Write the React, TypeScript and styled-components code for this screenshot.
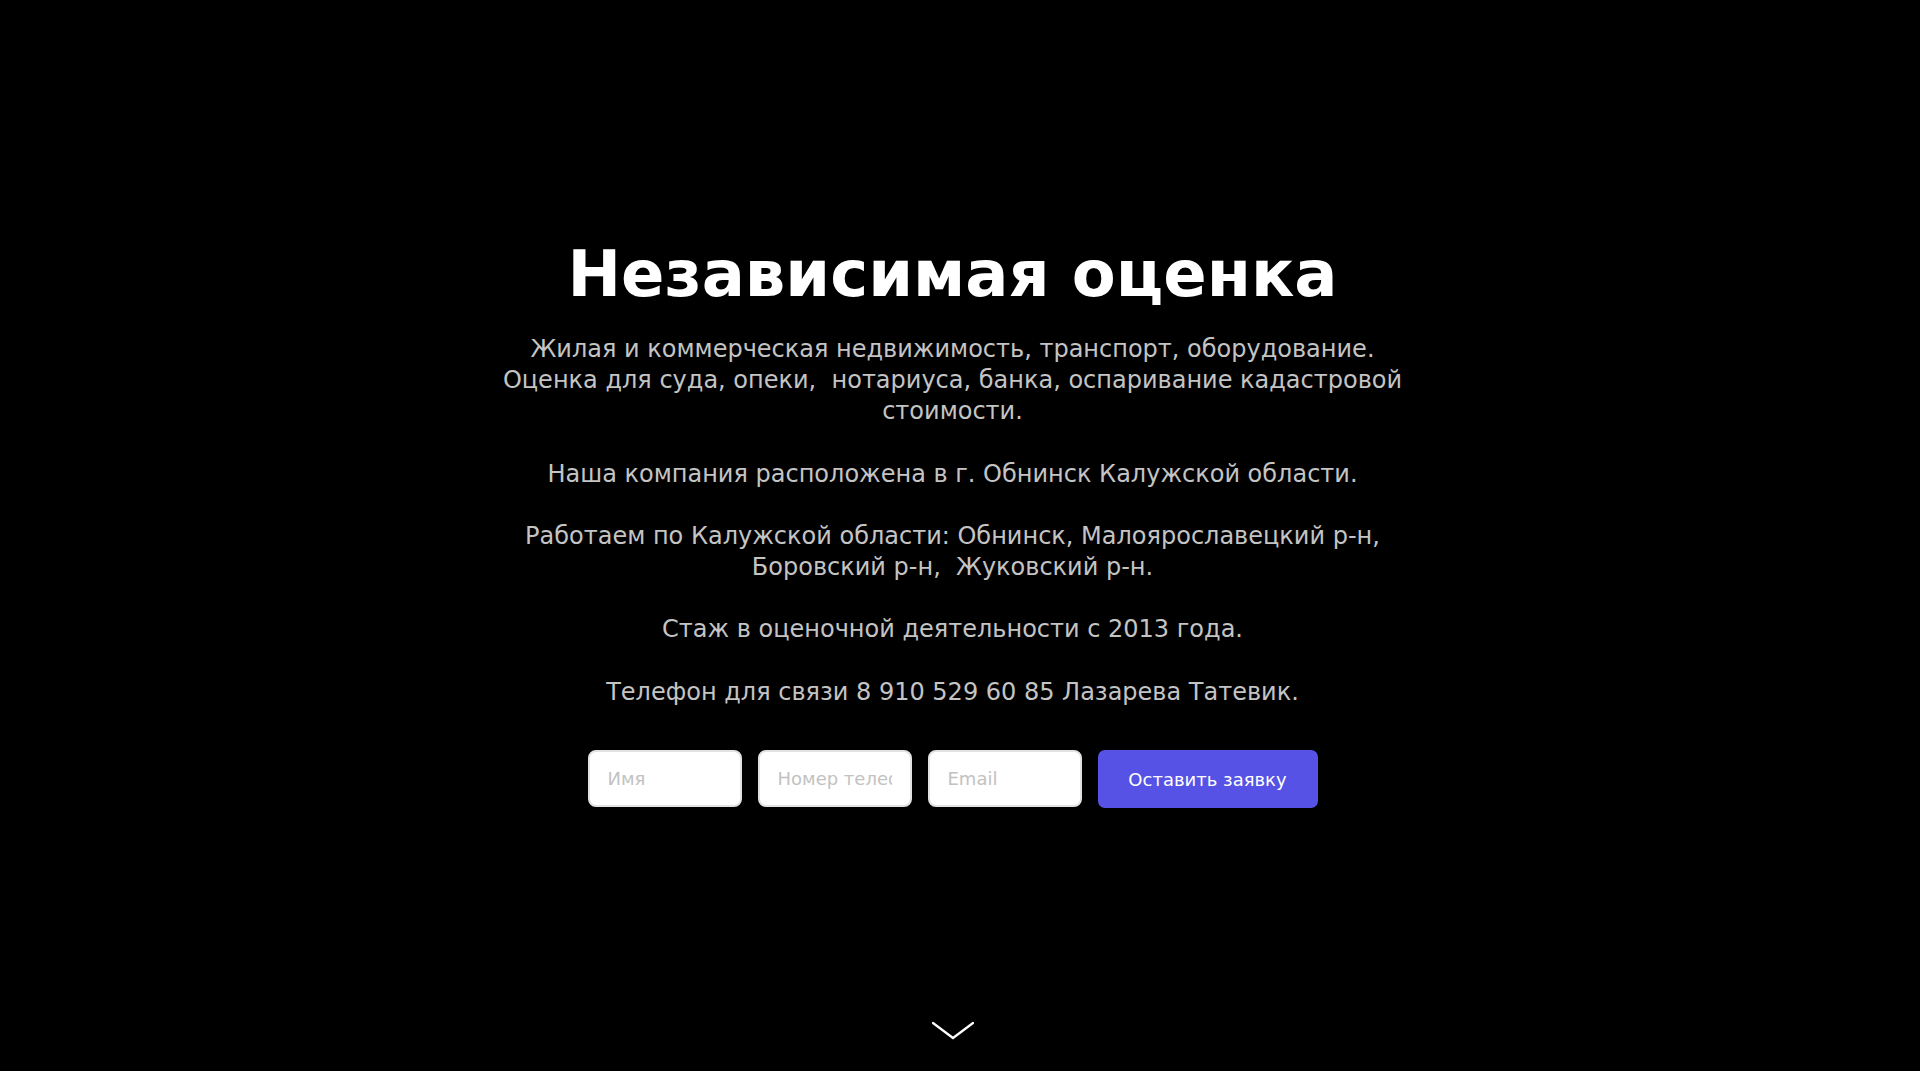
import React from "react";
import styled, { createGlobalStyle } from "styled-components";

const GlobalStyle = createGlobalStyle`
  html, body {
    margin: 0;
    padding: 0;
    background: #ffffff;
    font-family: "DejaVu Sans", "Noto Sans", sans-serif;
  }
  * {
    box-sizing: border-box;
  }
`;

/* right padding stands in for the 15px scrollbar gutter of the original page */
const Hero = styled.section`
  display: flex;
  flex-direction: column;
  align-items: center;
  min-height: 1071px;
  padding: 236px 35px 31px 20px;
  background: #000000;
  color: #ffffff;
`;

const Title = styled.h1`
  margin: 0 0 21px;
  font-size: 64px;
  line-height: 1.2;
  font-weight: 700;
  text-align: center;
`;

const Lead = styled.p`
  margin: 0;
  max-width: 920px;
  font-size: 24px;
  line-height: 1.3;
  color: #c4c4c4;
  text-align: center;
  white-space: pre-wrap;
`;

const Form = styled.form`
  display: flex;
  gap: 16px;
  margin-top: 42px;
`;

const Field = styled.input`
  width: 154px;
  height: 57px;
  padding: 0 18px;
  border: 2px solid #e2e2e2;
  border-radius: 8px;
  background: #ffffff;
  font-family: inherit;
  font-size: 18px;
  color: #222222;
  outline: none;

  &::placeholder {
    color: #c2c2c2;
  }
`;

const Submit = styled.button`
  width: 220px;
  height: 58px;
  border: none;
  border-radius: 7px;
  background: #5552e5;
  color: #ffffff;
  font-family: inherit;
  font-size: 18px;
  cursor: pointer;
`;

const ScrollDown = styled.a`
  display: block;
  margin-top: auto;
  width: 42px;
  height: 19px;
  line-height: 0;
`;

const Below = styled.section`
  height: 42px;
  background: #ffffff;
`;

const App = () => {
  return (
    <>
      <GlobalStyle />
      <Hero>
        <Title>Независимая оценка</Title>
        <Lead>
          Жилая и коммерческая недвижимость, транспорт, оборудование.
          <br />
          Оценка для суда, опеки,{"  "}нотариуса, банка, оспаривание кадастровой стоимости.
          <br />
          <br />
          Наша компания расположена в г. Обнинск Калужской области.
          <br />
          <br />
          Работаем по Калужской области: Обнинск, Малоярославецкий р-н, Боровский р-н,{"  "}Жуковский р-н.
          <br />
          <br />
          Стаж в оценочной деятельности с 2013 года.
          <br />
          <br />
          Телефон для связи 8 910 529 60 85 Лазарева Татевик.
        </Lead>
        <Form onSubmit={(e) => e.preventDefault()}>
          <Field type="text" placeholder="Имя" />
          <Field type="tel" placeholder="Номер телефона" />
          <Field type="email" placeholder="Email" />
          <Submit type="submit">Оставить заявку</Submit>
        </Form>
        <ScrollDown href="#next">
          <svg width="42" height="19" viewBox="0 0 42 19" fill="none">
            <path
              d="M1 2 L21 17 L41 2"
              stroke="#ffffff"
              strokeWidth="2.2"
              strokeLinecap="round"
              strokeLinejoin="miter"
            />
          </svg>
        </ScrollDown>
      </Hero>
      <Below id="next" />
    </>
  );
};

export default App;
